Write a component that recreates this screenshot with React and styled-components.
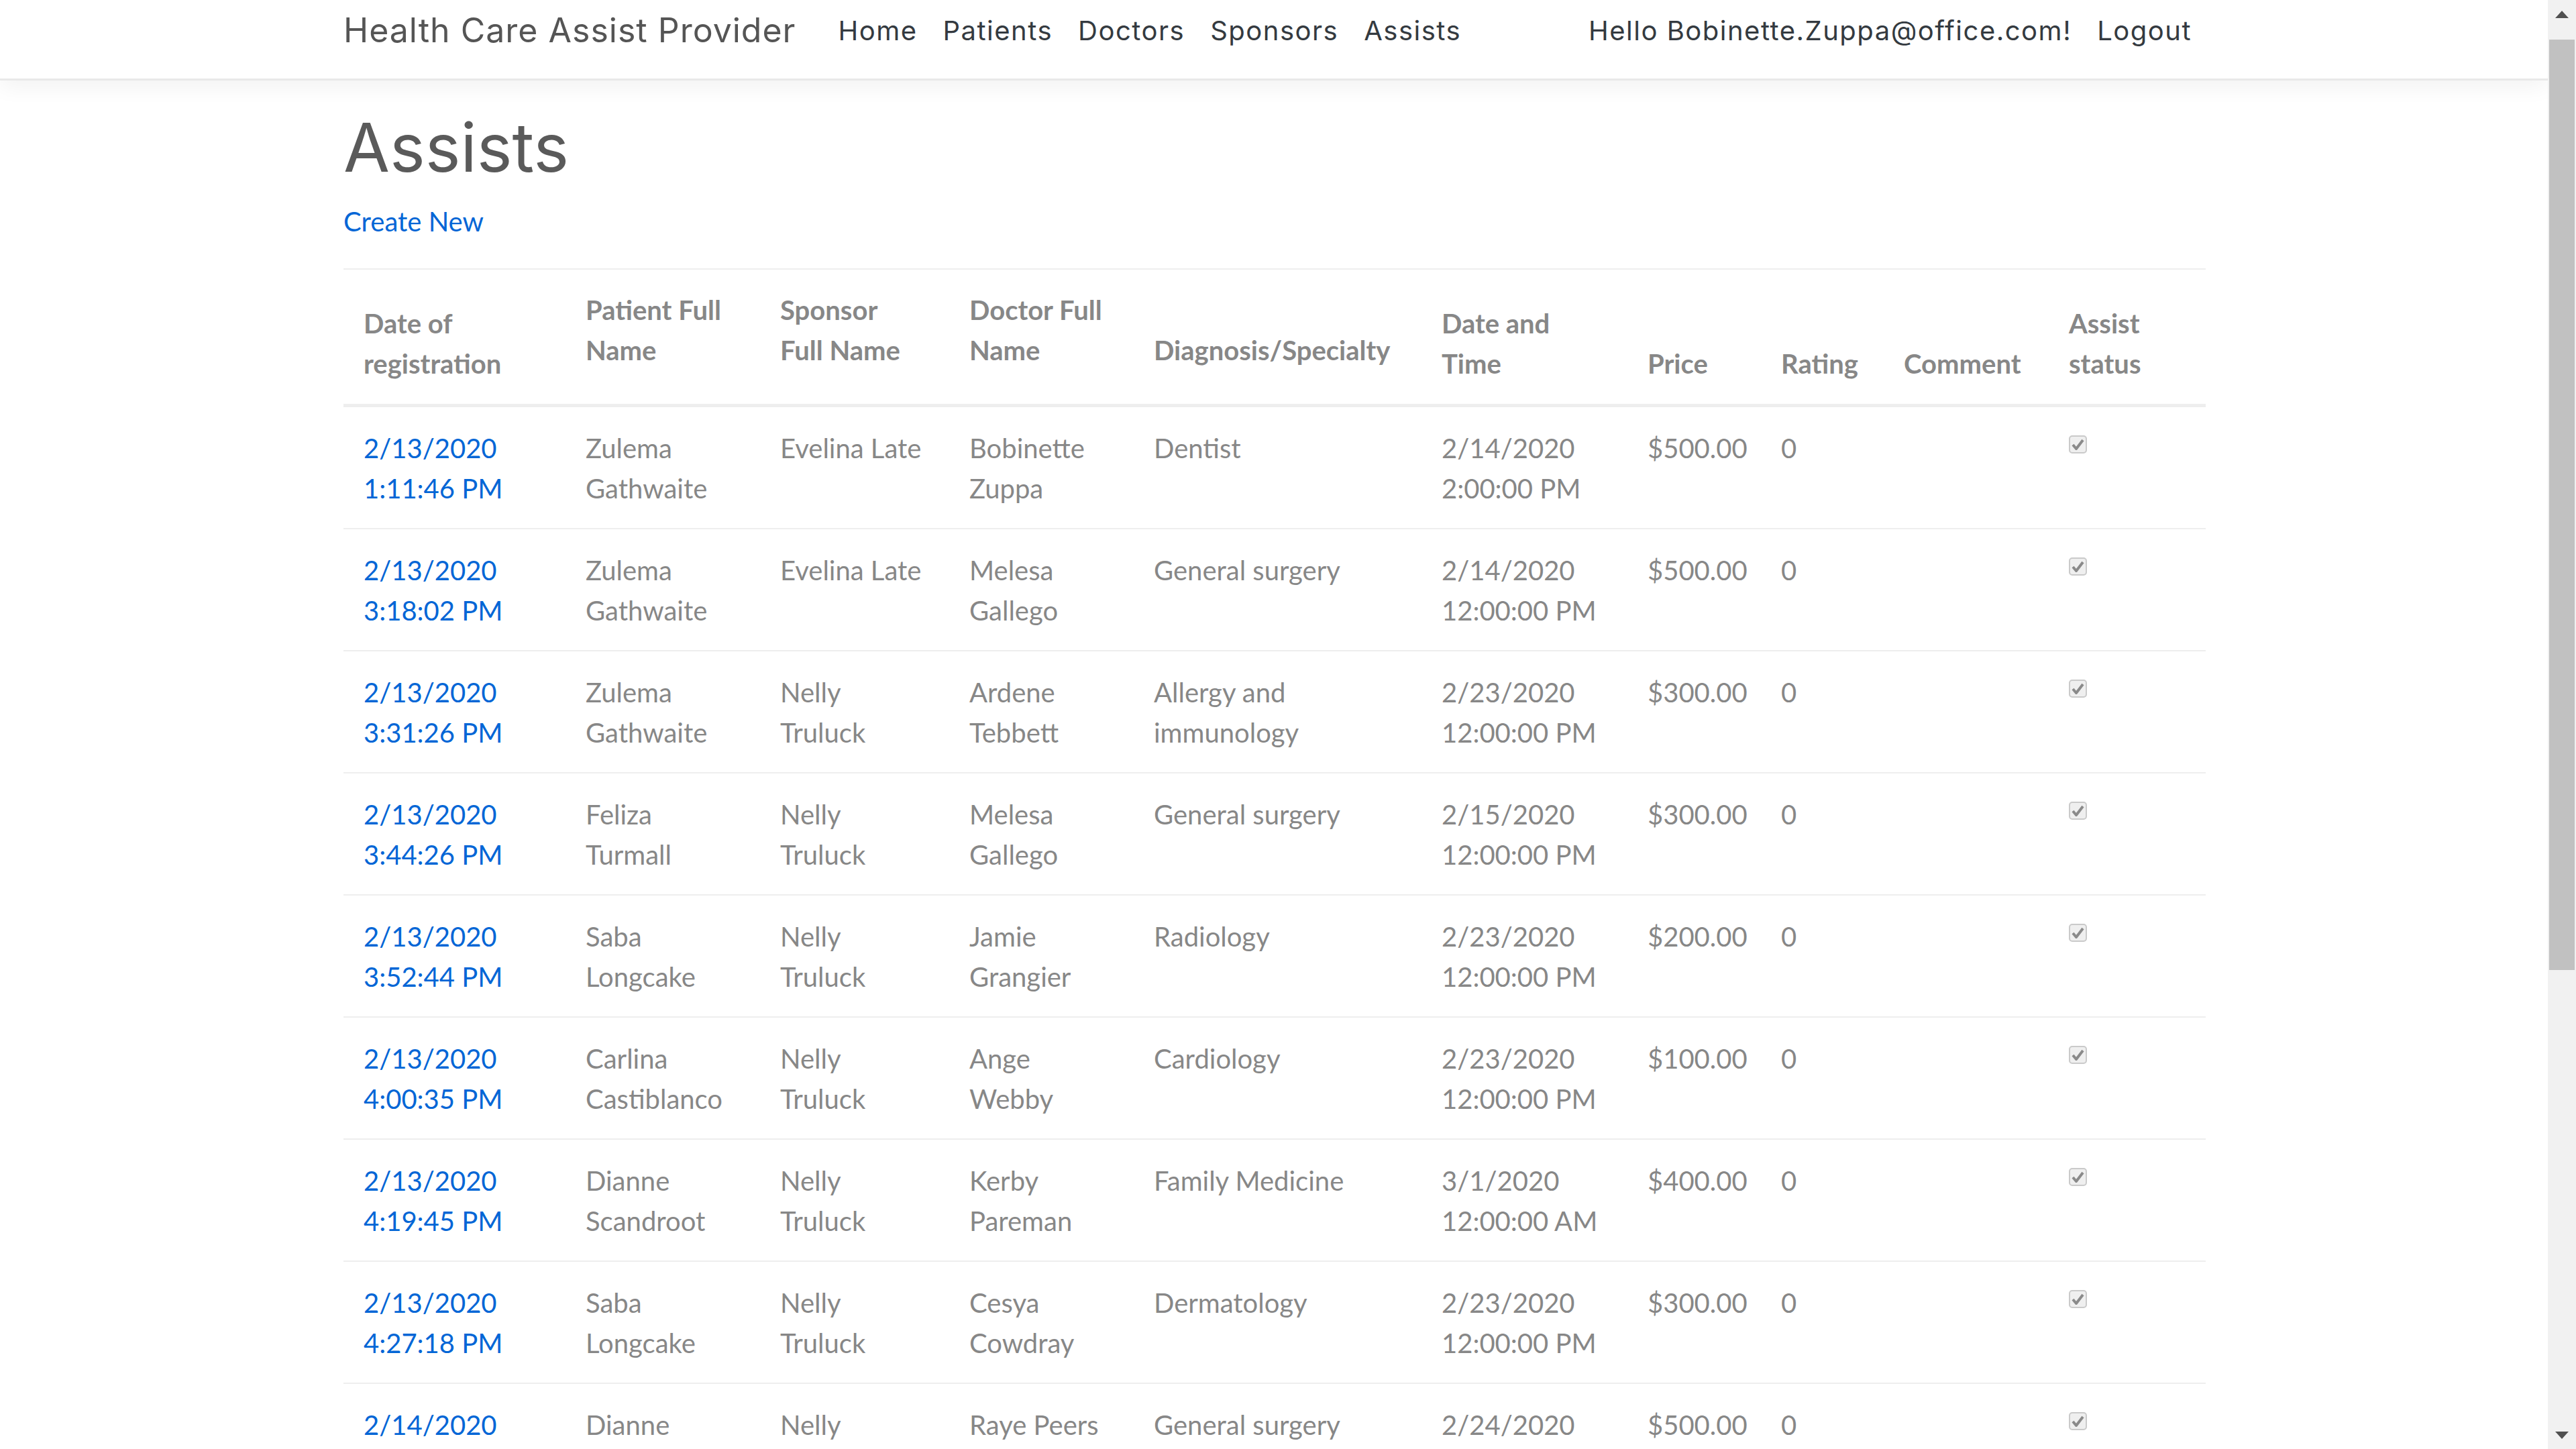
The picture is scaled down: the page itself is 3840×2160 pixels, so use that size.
import React from "react";
import styled, { createGlobalStyle } from "styled-components";

const GlobalStyle = createGlobalStyle`
    html, body {
        margin: 0;
        padding: 0;
        height: 100%;
    }
    body {
        font-family: Lato, "Open Sans", sans-serif;
        font-size: 40px;
        line-height: 60px;
        color: #878787;
        background: #fff;
    }
    #root {
        height: 100%;
    }
`;

const Shell = styled.div`
    display: flex;
    height: 100vh;
    overflow: hidden;
`;

const Page = styled.div`
    flex: 1;
    min-width: 0;
    overflow: hidden;
`;

const Container = styled.div`
    box-sizing: border-box;
    max-width: 2850px;
    margin: 0 auto;
    padding: 0 38px;
`;

const Navbar = styled.header`
    position: relative;
    z-index: 1;
    height: 117px;
    background: #fff;
    border-bottom: 3px solid #e9e9e9;
    box-shadow: 0 10px 30px rgba(0, 0, 0, 0.05);
`;

const NavInner = styled(Container)`
    display: flex;
    align-items: center;
    height: 100%;
    padding-bottom: 26px;
    font-family: Inter, "Open Sans", sans-serif;
`;

const Brand = styled.a`
    font-size: 50px;
    line-height: 75px;
    letter-spacing: 1px;
    color: #555;
    margin-right: 44px;
    text-decoration: none;
    white-space: nowrap;
`;

const NavList = styled.nav`
    display: flex;
    align-items: center;
    ${props => props.$end && "margin-left: auto;"}
`;

const NavLink = styled.a`
    padding: 0 19px;
    font-size: 40px;
    line-height: 60px;
    letter-spacing: 1.5px;
    color: #343a40;
    text-decoration: none;
    white-space: nowrap;
`;

const Main = styled(Container)`
    padding-top: 40px;
`;

const Title = styled.h1`
    margin: 0 0 20px;
    font-family: Inter, "Open Sans", sans-serif;
    font-weight: 400;
    font-size: 100px;
    line-height: 120px;
    color: #5a5a5a;
`;

const Actions = styled.p`
    margin: 0 0 40px;
`;

const Link = styled.a`
    color: #0366d6;
    text-decoration: none;
`;

const Table = styled.table`
    width: 100%;
    border-collapse: collapse;
    table-layout: fixed;
`;

const Col = styled.col`
    width: ${props => props.$w}px;
`;

const Th = styled.th`
    padding: 30px 30px ${props => (props.$label ? 50 : 30)}px;
    text-align: left;
    vertical-align: bottom;
    font-weight: 700;
    white-space: pre;
    border-top: 2px solid #eeeeee;
    border-bottom: 5px solid #eeeeee;
`;

const Td = styled.td`
    padding: 31px 30px 29px;
    vertical-align: top;
    white-space: pre;
    border-top: 2px solid #eeeeee;
`;

const CheckBox = styled.svg`
    display: block;
    margin-top: 11px;
`;

const ScrollTrack = styled.div`
    flex: none;
    width: 42px;
    display: flex;
    flex-direction: column;
    align-items: center;
    background: #f1f1f1;
`;

const ScrollArrow = styled.div`
    flex: none;
    height: 42px;
    width: 100%;
    display: flex;
    align-items: center;
    justify-content: center;
    ${props => props.$down && "margin-top: auto;"}
`;

const ScrollThumb = styled.div`
    width: 38px;
    height: 1387px;
    margin-top: 17px;
    background: #c1c1c1;
`;

const columns = [
    { title: "Date of\nregistration", w: 331 },
    { title: "Patient Full\nName", w: 290, label: true },
    { title: "Sponsor\nFull Name", w: 282, label: true },
    { title: "Doctor Full\nName", w: 275, label: true },
    { title: "Diagnosis/Specialty", w: 429, label: true },
    { title: "Date and\nTime", w: 307 },
    { title: "Price", w: 199 },
    { title: "Rating", w: 183 },
    { title: "Comment", w: 246 },
    { title: "Assist\nstatus", w: 234 },
];

const assists = [
    ["2/13/2020\n1:11:46 PM", "Zulema\nGathwaite", "Evelina Late", "Bobinette\nZuppa", "Dentist", "2/14/2020\n2:00:00 PM", "$500.00", "0"],
    ["2/13/2020\n3:18:02 PM", "Zulema\nGathwaite", "Evelina Late", "Melesa\nGallego", "General surgery", "2/14/2020\n12:00:00 PM", "$500.00", "0"],
    ["2/13/2020\n3:31:26 PM", "Zulema\nGathwaite", "Nelly\nTruluck", "Ardene\nTebbett", "Allergy and\nimmunology", "2/23/2020\n12:00:00 PM", "$300.00", "0"],
    ["2/13/2020\n3:44:26 PM", "Feliza\nTurmall", "Nelly\nTruluck", "Melesa\nGallego", "General surgery", "2/15/2020\n12:00:00 PM", "$300.00", "0"],
    ["2/13/2020\n3:52:44 PM", "Saba\nLongcake", "Nelly\nTruluck", "Jamie\nGrangier", "Radiology", "2/23/2020\n12:00:00 PM", "$200.00", "0"],
    ["2/13/2020\n4:00:35 PM", "Carlina\nCastiblanco", "Nelly\nTruluck", "Ange\nWebby", "Cardiology", "2/23/2020\n12:00:00 PM", "$100.00", "0"],
    ["2/13/2020\n4:19:45 PM", "Dianne\nScandroot", "Nelly\nTruluck", "Kerby\nPareman", "Family Medicine", "3/1/2020\n12:00:00 AM", "$400.00", "0"],
    ["2/13/2020\n4:27:18 PM", "Saba\nLongcake", "Nelly\nTruluck", "Cesya\nCowdray", "Dermatology", "2/23/2020\n12:00:00 PM", "$300.00", "0"],
    ["2/14/2020\n9:05:12 AM", "Dianne\nScandroot", "Nelly\nTruluck", "Raye Peers", "General surgery", "2/24/2020\n12:00:00 PM", "$500.00", "0"],
];

const Checked = () => (
    <CheckBox width="27" height="27" viewBox="0 0 27 27">
        <rect x="1" y="1" width="25" height="25" rx="4" fill="#efefef" stroke="#cacaca" strokeWidth="2" />
        <path d="M6 14 L11 20 L21 7" fill="none" stroke="#8a8a8a" strokeWidth="4" strokeLinejoin="round" />
    </CheckBox>
);

const Arrow = ({ down }) => (
    <svg width="20" height="11" viewBox="0 0 20 11">
        <path d={down ? "M0 0 H20 L10 11 Z" : "M0 11 H20 L10 0 Z"} fill="#505050" />
    </svg>
);

const App = () => (
    <Shell>
        <GlobalStyle />
        <Page>
            <Navbar>
                <NavInner>
                    <Brand href="#">Health Care Assist Provider</Brand>
                    <NavList>
                        {["Home", "Patients", "Doctors", "Sponsors", "Assists"].map(item => (
                            <NavLink key={item} href="#">
                                {item}
                            </NavLink>
                        ))}
                    </NavList>
                    <NavList $end>
                        <NavLink href="#">Hello Bobinette.Zuppa@office.com!</NavLink>
                        <NavLink href="#">Logout</NavLink>
                    </NavList>
                </NavInner>
            </Navbar>
            <Main>
                <Title>Assists</Title>
                <Actions>
                    <Link href="#">Create New</Link>
                </Actions>
                <Table>
                    <colgroup>
                        {columns.map(c => (
                            <Col key={c.title} $w={c.w} />
                        ))}
                    </colgroup>
                    <thead>
                        <tr>
                            {columns.map(c => (
                                <Th key={c.title} $label={c.label}>
                                    {c.title}
                                </Th>
                            ))}
                        </tr>
                    </thead>
                    <tbody>
                        {assists.map(row => (
                            <tr key={row[0]}>
                                <Td>
                                    <Link href="#">{row[0]}</Link>
                                </Td>
                                {row.slice(1).map((cell, i) => (
                                    <Td key={i}>{cell}</Td>
                                ))}
                                <Td />
                                <Td>
                                    <Checked />
                                </Td>
                            </tr>
                        ))}
                    </tbody>
                </Table>
            </Main>
        </Page>
        <ScrollTrack>
            <ScrollArrow>
                <Arrow />
            </ScrollArrow>
            <ScrollThumb />
            <ScrollArrow $down>
                <Arrow down />
            </ScrollArrow>
        </ScrollTrack>
    </Shell>
);

export default App;
